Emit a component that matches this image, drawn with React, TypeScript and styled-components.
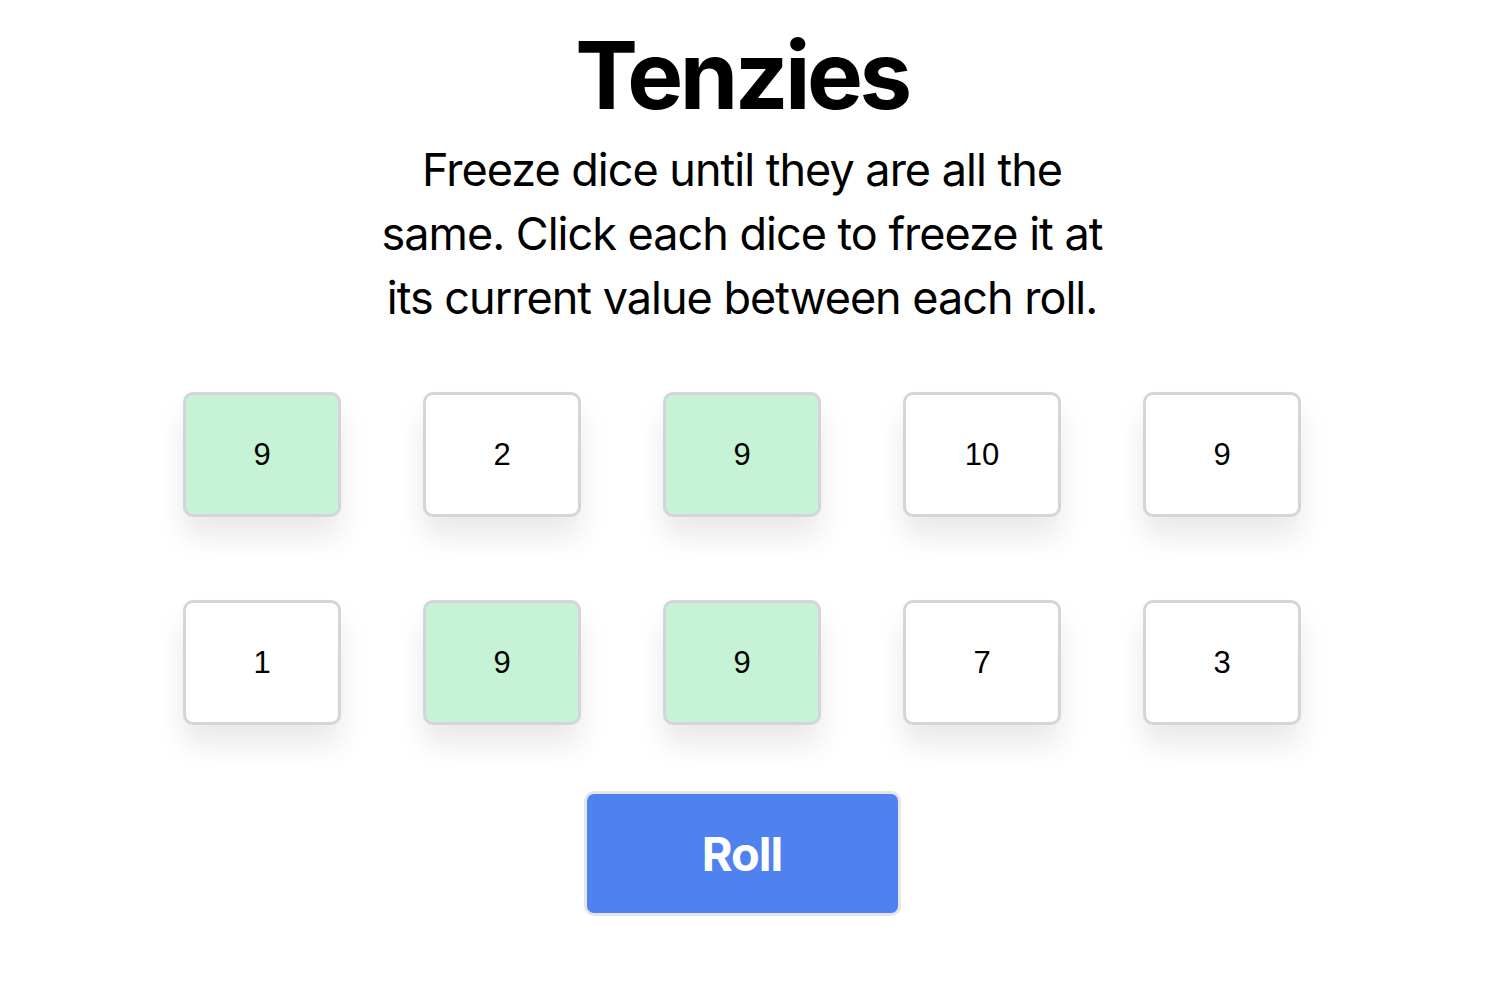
import React from "react";
import styled, { createGlobalStyle } from "styled-components";

const GlobalStyle = createGlobalStyle`
  body {
    margin: 0;
    background: #ffffff;
    font-family: Inter, "Noto Sans", sans-serif;
  }
`;

const Main = styled.main`
  display: flex;
  flex-direction: column;
  align-items: center;
  padding: 17px 12px 0 0;
`;

const Title = styled.h1`
  margin: 0;
  font-size: 94px;
  font-weight: 700;
  letter-spacing: -3.5px;
  line-height: 116px;
  color: #000;
`;

const Instructions = styled.p`
  margin: 5px 0 0;
  width: 740px;
  text-align: center;
  font-size: 45px;
  line-height: 64px;
  letter-spacing: -1px;
  color: #000;
`;

const DiceGrid = styled.div`
  display: grid;
  grid-template-columns: repeat(5, 158px);
  grid-auto-rows: 125px;
  column-gap: 82px;
  row-gap: 83px;
  margin-top: 62px;
`;

const Die = styled.button<{ held: boolean }>`
  display: flex;
  align-items: center;
  justify-content: center;
  box-sizing: border-box;
  border: 3px solid #d4d5db;
  border-radius: 10px;
  background: ${(props) => (props.held ? "#c6f3d5" : "#ffffff")};
  box-shadow: 0 20px 30px rgba(0, 0, 0, 0.09);
  font-family: "Liberation Sans", Arial, sans-serif;
  font-size: 31px;
  color: #000;
  cursor: pointer;
`;

const RollButton = styled.button`
  margin-top: 66px;
  width: 317px;
  height: 125px;
  box-sizing: border-box;
  border: 3px solid #e6e6e8;
  border-radius: 10px;
  background: #4f82ee;
  color: #fff;
  font-family: Inter, "Noto Sans", sans-serif;
  font-size: 47px;
  font-weight: 700;
  letter-spacing: -1px;
  cursor: pointer;
`;

const dice = [
  { value: 9, held: true },
  { value: 2, held: false },
  { value: 9, held: true },
  { value: 10, held: false },
  { value: 9, held: false },
  { value: 1, held: false },
  { value: 9, held: true },
  { value: 9, held: true },
  { value: 7, held: false },
  { value: 3, held: false },
];

const App = () => {
  return (
    <>
      <GlobalStyle />
      <Main>
        <Title>Tenzies</Title>
        <Instructions>
          Freeze dice until they are all the same. Click each dice to freeze it
          at its current value between each roll.
        </Instructions>
        <DiceGrid>
          {dice.map((die, i) => (
            <Die key={i} held={die.held}>
              {die.value}
            </Die>
          ))}
        </DiceGrid>
        <RollButton>Roll</RollButton>
      </Main>
    </>
  );
};

export default App;
